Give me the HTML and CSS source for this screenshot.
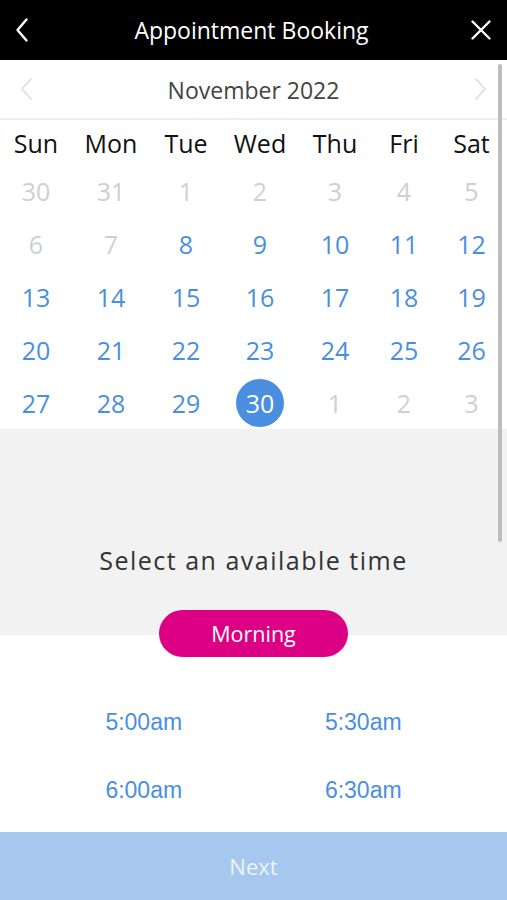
FILE: index.html
```html
<!DOCTYPE html>
<html lang="en">
<head>
  <meta charset="UTF-8">
  <meta name="viewport" content="width=device-width, initial-scale=1.0">
  <title>Appointment Booking</title>
  <link rel="stylesheet" href="styles.css">
</head>
<body>
  <div class="app">
    <!-- Top bar -->
    <header class="topbar">
      <button class="icon-btn" aria-label="Back">
        <svg width="16" height="26" viewBox="0 0 16 26"><path d="M12.5 2.5 L3.5 13 L12.5 23.5" fill="none" stroke="#fff" stroke-width="2.4" stroke-linecap="round" stroke-linejoin="round"/></svg>
      </button>
      <h1 class="topbar-title">Appointment Booking</h1>
      <button class="icon-btn" aria-label="Close">
        <svg width="22" height="22" viewBox="0 0 22 22"><path d="M2.5 2.5 L19.5 19.5 M19.5 2.5 L2.5 19.5" fill="none" stroke="#fff" stroke-width="2.4" stroke-linecap="round"/></svg>
      </button>
    </header>

    <!-- Month navigation -->
    <div class="month-nav">
      <button class="icon-btn" aria-label="Previous month">
        <svg width="14" height="24" viewBox="0 0 14 24"><path d="M12 2 L3 12 L12 22" fill="none" stroke="#dcdcdc" stroke-width="1.6" stroke-linecap="round" stroke-linejoin="round"/></svg>
      </button>
      <div class="month-name">November 2022</div>
      <button class="icon-btn" aria-label="Next month">
        <svg width="14" height="24" viewBox="0 0 14 24"><path d="M2 2 L11 12 L2 22" fill="none" stroke="#dcdcdc" stroke-width="1.6" stroke-linecap="round" stroke-linejoin="round"/></svg>
      </button>
    </div>

    <!-- Calendar -->
    <div class="calendar">
      <div class="cal-row weekdays">
        <span>Sun</span><span>Mon</span><span>Tue</span><span>Wed</span><span>Thu</span><span>Fri</span><span>Sat</span>
      </div>
      <div class="cal-row">
        <span class="day muted">30</span><span class="day muted">31</span><span class="day muted">1</span><span class="day muted">2</span><span class="day muted">3</span><span class="day muted">4</span><span class="day muted">5</span>
      </div>
      <div class="cal-row">
        <span class="day muted">6</span><span class="day muted">7</span><span class="day">8</span><span class="day">9</span><span class="day">10</span><span class="day">11</span><span class="day">12</span>
      </div>
      <div class="cal-row">
        <span class="day">13</span><span class="day">14</span><span class="day">15</span><span class="day">16</span><span class="day">17</span><span class="day">18</span><span class="day">19</span>
      </div>
      <div class="cal-row">
        <span class="day">20</span><span class="day">21</span><span class="day">22</span><span class="day">23</span><span class="day">24</span><span class="day">25</span><span class="day">26</span>
      </div>
      <div class="cal-row">
        <span class="day">27</span><span class="day">28</span><span class="day">29</span><span class="day"><b class="selected">30</b></span><span class="day muted">1</span><span class="day muted">2</span><span class="day muted">3</span>
      </div>
    </div>

    <!-- Time selection -->
    <div class="time-panel">
      <h2 class="time-title">Select an available time</h2>
      <div class="period">Morning</div>
      <div class="slots">
        <span>5:00am</span><span>5:30am</span>
        <span>6:00am</span><span>6:30am</span>
      </div>
    </div>

    <button class="next-btn">Next</button>

    <div class="scrollbar"></div>
  </div>
</body>
</html>
```

FILE: styles.css
```css
* {
  margin: 0;
  padding: 0;
  box-sizing: border-box;
}

body {
  font-family: "Open Sans", "Noto Sans", sans-serif;
  background: #fff;
}

.app {
  position: relative;
  width: 507px;
  height: 900px;
  display: flex;
  flex-direction: column;
  overflow: hidden;
}

.icon-btn {
  background: none;
  border: none;
  display: flex;
  align-items: center;
  justify-content: center;
  cursor: pointer;
}

/* Top bar */
.topbar {
  height: 60px;
  background: #000;
  display: flex;
  align-items: center;
  justify-content: space-between;
  padding: 0 14px 0 10px;
}

.topbar .icon-btn {
  width: 24px;
  height: 30px;
}

.topbar-title {
  color: #fff;
  font-size: 23px;
  font-weight: normal;
  padding-bottom: 1px;
}

/* Month navigation */
.month-nav {
  height: 60px;
  display: flex;
  align-items: center;
  justify-content: space-between;
  padding: 0 16px 0 16px;
  border-bottom: 2px solid #f0f0f0;
}

.month-nav .icon-btn {
  width: 20px;
  height: 30px;
}

.month-name {
  font-size: 23px;
  color: #444;
  padding-top: 2px;
}

/* Calendar */
.calendar {
  display: flex;
  flex-direction: column;
}

.cal-row {
  display: grid;
  grid-template-columns: 72px 78px 72px 76px 74px 64px 71px;
  height: 53px;
  align-items: center;
  text-align: center;
  font-size: 25px;
}

.cal-row.weekdays {
  height: 44px;
  color: #111;
  padding-top: 2px;
}

.day {
  color: #4a8fdf;
  display: flex;
  justify-content: center;
  align-items: center;
}

.day.muted {
  color: #cfcfcf;
}

.selected {
  width: 48px;
  height: 48px;
  border-radius: 50%;
  background: #4a8fdf;
  color: #fff;
  font-weight: normal;
  display: flex;
  align-items: center;
  justify-content: center;
}

/* Time selection */
.time-panel {
  flex: 1;
  background: linear-gradient(#f2f2f2 206px, #fff 206px);
  display: flex;
  flex-direction: column;
  align-items: center;
  padding-top: 115px;
}

.time-title {
  font-size: 25px;
  font-weight: normal;
  letter-spacing: 1.5px;
  color: #333;
  line-height: 32px;
}

.period {
  margin-top: 34px;
  width: 189px;
  height: 47px;
  border-radius: 24px;
  background: #dc0084;
  color: #fff;
  font-size: 21.5px;
  display: flex;
  align-items: center;
  justify-content: center;
}

.slots {
  margin-top: 31px;
  width: 100%;
  padding: 0 34px;
  display: grid;
  grid-template-columns: 1fr 1fr;
  grid-auto-rows: 68px;
  align-items: center;
  text-align: center;
  font-family: "Liberation Sans", Arial, sans-serif;
  font-size: 23px;
  color: #4a8fdf;
}

/* Next button */
.next-btn {
  height: 68px;
  border: none;
  background: #a6c8ee;
  color: #eef4fc;
  font-family: "Open Sans", "Noto Sans", sans-serif;
  font-size: 22px;
}

/* Overlay scrollbar */
.scrollbar {
  position: absolute;
  top: 64px;
  left: 498px;
  width: 4px;
  height: 478px;
  border-radius: 2px;
  background: #bdbdbd;
}
```
